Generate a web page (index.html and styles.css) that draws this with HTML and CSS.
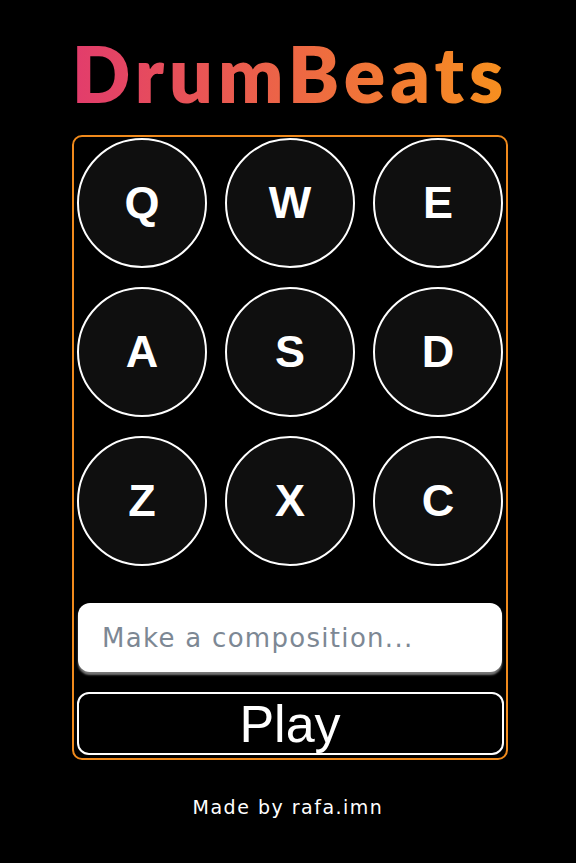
FILE: index.html
```html
<!DOCTYPE html>
<html>
<head>
<meta charset="utf-8">
<link rel="stylesheet" href="styles.css">
</head>
<body>
<main class="app">
  <h1 class="title">DrumBeats</h1>
  <section class="machine">
    <div class="pads">
      <button class="pad">Q</button>
      <button class="pad">W</button>
      <button class="pad">E</button>
      <button class="pad">A</button>
      <button class="pad">S</button>
      <button class="pad">D</button>
      <button class="pad">Z</button>
      <button class="pad">X</button>
      <button class="pad">C</button>
    </div>
    <input class="composer" type="text" placeholder="Make a composition...">
    <button class="play">Play</button>
  </section>
  <footer class="credit">Made by rafa.imn</footer>
</main>
</body>
</html>
```

FILE: styles.css
```css
html, body {
  margin: 0;
  padding: 0;
  background: #000;
}
.app {
  display: flex;
  flex-direction: column;
  align-items: center;
  padding-top: 28px;
}
.title {
  margin: 0 0 0 4px;
  font-family: Lato, "Open Sans", sans-serif;
  font-weight: 800;
  font-size: 77px;
  line-height: 90px;
  letter-spacing: 5px;
  background: linear-gradient(90deg, #e23c6c, #f7901e);
  -webkit-background-clip: text;
  background-clip: text;
  color: transparent;
}
.machine {
  margin-top: 17px;
  margin-left: 4px;
  width: 432px;
  border: 2px solid #f08a1c;
  border-radius: 10px;
  padding: 1px 0 3px;
  display: flex;
  flex-direction: column;
  align-items: center;
}
.pads {
  display: grid;
  grid-template-columns: repeat(3, 130px);
  column-gap: 18px;
  row-gap: 19px;
}
.pad {
  width: 130px;
  height: 130px;
  border-radius: 50%;
  border: 2px solid #fff;
  background: #0f0f0f;
  color: #fff;
  font-family: "Liberation Sans", Arial, sans-serif;
  font-weight: 700;
  font-size: 45px;
  padding: 0;
}
.composer {
  margin-top: 37px;
  width: 424px;
  height: 69px;
  box-sizing: border-box;
  border: none;
  border-radius: 12px;
  background: #fff;
  box-shadow: 0 3px 2px #777;
  padding: 0 24px;
  font-family: "DejaVu Sans", Verdana, sans-serif;
  font-size: 26px;
  letter-spacing: 1.3px;
  color: #333;
}
.composer::placeholder {
  color: #7d8894;
}
.play {
  margin-top: 20px;
  width: 427px;
  height: 63px;
  border: 2px solid #fff;
  border-radius: 12px;
  background: #000;
  color: #fff;
  font-family: "Liberation Sans", Arial, sans-serif;
  font-size: 52px;
  line-height: 1;
  padding: 0;
}
.credit {
  margin-top: 36px;
  color: #fff;
  font-family: "DejaVu Sans", Verdana, sans-serif;
  font-size: 19px;
  letter-spacing: 1.5px;
}
```
